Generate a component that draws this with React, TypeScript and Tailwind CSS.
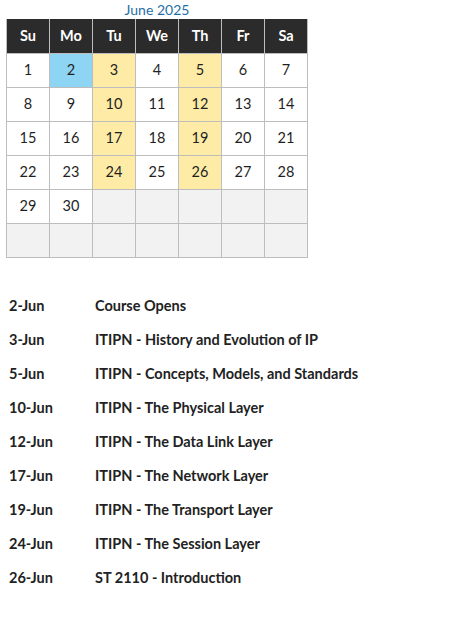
import React from 'react';

const days = ['Su', 'Mo', 'Tu', 'We', 'Th', 'Fr', 'Sa'];

const weeks: (number | null)[][] = [
  [1, 2, 3, 4, 5, 6, 7],
  [8, 9, 10, 11, 12, 13, 14],
  [15, 16, 17, 18, 19, 20, 21],
  [22, 23, 24, 25, 26, 27, 28],
  [29, 30, null, null, null, null, null],
  [null, null, null, null, null, null, null],
];

const classDays = [3, 5, 10, 12, 17, 19, 24, 26];

const schedule = [
  { date: '2-Jun', title: 'Course Opens' },
  { date: '3-Jun', title: 'ITIPN - History and Evolution of IP' },
  { date: '5-Jun', title: 'ITIPN - Concepts, Models, and Standards' },
  { date: '10-Jun', title: 'ITIPN - The Physical Layer' },
  { date: '12-Jun', title: 'ITIPN - The Data Link Layer' },
  { date: '17-Jun', title: 'ITIPN - The Network Layer' },
  { date: '19-Jun', title: 'ITIPN - The Transport Layer' },
  { date: '24-Jun', title: 'ITIPN - The Session Layer' },
  { date: '26-Jun', title: 'ST 2110 - Introduction' },
];

const cellColor = (d: number | null) => {
  if (d === null) return 'bg-[#f2f2f2]';
  if (d === 2) return 'bg-[#8ed4f3]';
  if (classDays.includes(d)) return 'bg-[#feeca6]';
  return 'bg-white';
};

export default function App() {
  return (
    <div className="w-[456px] h-[630px] bg-white text-[#1f1f1f] [font-family:Lato,'Open_Sans',sans-serif]">
      <div className="w-[302px] ml-[6px]">
        <div className="h-[19px] text-center text-[14px] leading-[19px] text-[#1f6fa6]">June 2025</div>
        <table className="w-full border-collapse table-fixed">
          <thead>
            <tr className="h-[34px] bg-[#2b2b2b]">
              {days.map((d) => (
                <th key={d} className="border-x border-[#bdbdbd] text-white text-[14.5px] font-bold p-0">
                  {d}
                </th>
              ))}
            </tr>
          </thead>
          <tbody>
            {weeks.map((w, i) => (
              <tr key={i} className="h-[34px]">
                {w.map((d, j) => (
                  <td key={j} className={`border border-[#bdbdbd] text-center text-[14.5px] p-0 ${cellColor(d)}`}>
                    {d ?? ''}
                  </td>
                ))}
              </tr>
            ))}
          </tbody>
        </table>
      </div>

      <div className="mt-[31px] flex flex-col">
        {schedule.map((s) => (
          <div key={s.date} className="flex h-[34px] items-center font-bold text-[14.5px] text-[#222]">
            <span className="w-[95px] pl-[9px]">{s.date}</span>
            <span>{s.title}</span>
          </div>
        ))}
      </div>
    </div>
  );
}
